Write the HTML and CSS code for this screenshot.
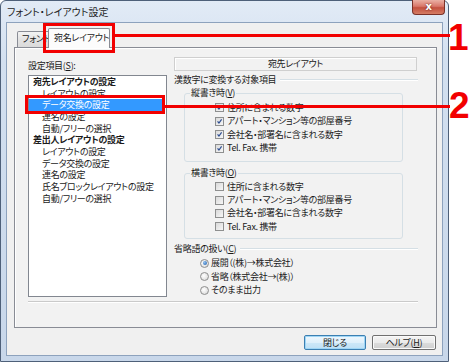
FILE: index.html
```html
<!DOCTYPE html>
<html lang="ja">
<head>
<meta charset="utf-8">
<title>フォント・レイアウト設定</title>
<link rel="stylesheet" href="styles.css">
</head>
<body>
<div class="stage">
  <div class="window">
    <div class="titlebar">
      <span class="title">フォント・レイアウト設定</span>
      <div class="close">x</div>
    </div>
    <div class="client">
      <div class="tabs">
        <div class="tab">フォント</div>
        <div class="tab active">宛名レイアウト</div>
      </div>
      <div class="panel">
        <div class="content">
          <div class="leftcol">
            <div class="label">設定項目(<u>S</u>):</div>
            <ul class="list">
              <li class="head">宛先レイアウトの設定</li>
              <li class="sub">レイアウトの設定</li>
              <li class="sub sel">データ交換の設定</li>
              <li class="sub">連名の設定</li>
              <li class="sub">自動/フリーの選択</li>
              <li class="head">差出人レイアウトの設定</li>
              <li class="sub">レイアウトの設定</li>
              <li class="sub">データ交換の設定</li>
              <li class="sub">連名の設定</li>
              <li class="sub">氏名ブロックレイアウトの設定</li>
              <li class="sub">自動/フリーの選択</li>
            </ul>
          </div>
          <div class="rightcol">
            <div class="header">宛先レイアウト</div>
            <div class="sep g1"><span>漢数字に変換する対象項目</span><i></i></div>
            <fieldset class="fs fs1">
              <legend>縦書き時(<u>V</u>)</legend>
              <div class="rows">
                <div class="row"><span class="cb"><svg viewBox="0 0 9 9"><path d="M2 4.3 L3.8 6.4 L7.2 1.8" fill="none" stroke="#2d4d91" stroke-width="1.5"/></svg></span>住所に含まれる数字</div>
                <div class="row"><span class="cb"><svg viewBox="0 0 9 9"><path d="M2 4.3 L3.8 6.4 L7.2 1.8" fill="none" stroke="#2d4d91" stroke-width="1.5"/></svg></span>アパート・マンション等の部屋番号</div>
                <div class="row"><span class="cb"><svg viewBox="0 0 9 9"><path d="M2 4.3 L3.8 6.4 L7.2 1.8" fill="none" stroke="#2d4d91" stroke-width="1.5"/></svg></span>会社名・部署名に含まれる数字</div>
                <div class="row"><span class="cb"><svg viewBox="0 0 9 9"><path d="M2 4.3 L3.8 6.4 L7.2 1.8" fill="none" stroke="#2d4d91" stroke-width="1.5"/></svg></span>Tel. Fax. 携帯</div>
              </div>
            </fieldset>
            <fieldset class="fs fs2">
              <legend>横書き時(<u>O</u>)</legend>
              <div class="rows">
                <div class="row"><span class="cb"></span>住所に含まれる数字</div>
                <div class="row"><span class="cb"></span>アパート・マンション等の部屋番号</div>
                <div class="row"><span class="cb"></span>会社名・部署名に含まれる数字</div>
                <div class="row"><span class="cb"></span>Tel. Fax. 携帯</div>
              </div>
            </fieldset>
            <div class="sep g3"><span>省略語の扱い(<u>C</u>)</span><i></i></div>
            <div class="radios">
              <div class="row"><span class="rb on"></span>展開（(株)→株式会社）</div>
              <div class="row"><span class="rb"></span>省略（株式会社→(株)）</div>
              <div class="row"><span class="rb"></span>そのまま出力</div>
            </div>
          </div>
        </div>
      </div>
      <div class="buttons">
        <div class="btn default">閉じる</div>
        <div class="btn">ヘルプ(<u>H</u>)</div>
      </div>
    </div>
  </div>
  <div class="mark rect1"></div>
  <div class="mark line1"></div>
  <div class="num n1">1</div>
  <div class="mark rect2"></div>
  <div class="mark line2"></div>
  <div class="num n2">2</div>
</div>
</body>
</html>
```
FILE: styles.css
```css
* { box-sizing: border-box; margin: 0; padding: 0; }
body {
  margin: 0;
  background: #fff;
  font-family: "Noto Sans CJK JP", "Noto Sans", sans-serif;
  font-size: 9px;
  letter-spacing: -0.3px;
  color: #1a1a1a;
  font-feature-settings: "palt";
}
u { text-decoration: underline; text-underline-offset: 1px; }
.stage { position: relative; width: 470px; height: 364px; overflow: hidden; }

.window {
  width: 449px;
  height: 362px;
  display: flex;
  flex-direction: column;
  border: 1px solid #4e6079;
  border-radius: 6px 6px 0 0;
  background: linear-gradient(180deg, #e2ebf6 0, #d3e0f0 60px, #c8d7ea 100%);
}
.titlebar { height: 21px; display: flex; align-items: flex-start; }
.title { margin: 5px 0 0 6px; line-height: 12px; font-size: 10px; letter-spacing: 0; color: #1e1e1e; }
.close {
  margin-left: auto;
  margin-right: 3px;
  margin-top: -1px;
  width: 33px;
  height: 15px;
  border: 1px solid #7a3128;
  border-top: none;
  border-radius: 0 0 4px 4px;
  background: linear-gradient(180deg, #eab0a4 0, #d9776a 45%, #c3503f 55%, #d57d64 100%);
  display: flex;
  align-items: center;
  justify-content: center;
  color: #fff;
  font: bold 10px "DejaVu Sans", sans-serif;
  line-height: 10px;
  text-shadow: 0 0 2px #5a1a12;
}

.client {
  flex: 1;
  margin: 0 5px 5px 5px;
  border: 1px solid #8da2bd;
  background: #f0f0f0;
  padding: 5px 5px 0 7px;
  display: flex;
  flex-direction: column;
}
.tabs { height: 19px; display: flex; align-items: flex-end; }
.tab {
  height: 16px;
  width: 34px;
  margin-left: 3px;
  padding-left: 4px;
  border: 1px solid #898c95;
  border-bottom: none;
  border-radius: 2px 2px 0 0;
  background: linear-gradient(180deg, #f3f3f3, #e3e3e3 50%, #dadada);
  line-height: 14px;
  white-space: nowrap;
  overflow: hidden;
}
.tab.active {
  position: relative;
  z-index: 1;
  height: 20px;
  width: 62px;
  margin-left: -3px;
  margin-bottom: -1px;
  padding-left: 5px;
  background: #fcfcfc;
  line-height: 17px;
}
.panel {
  height: 281px;
  border: 1px solid #898c95;
  background: #f2f2f2;
  box-shadow: inset 1px 1px 0 #fff;
  padding: 9px 18px 0 13px;
}
.content {
  height: 245px;
  display: flex;
  border-bottom: 1px solid #cacaca;
  box-shadow: 0 1px 0 #fff;
}
.leftcol { width: 139px; }
.label { margin-top: 3px; line-height: 12px; }
.list {
  list-style: none;
  margin-top: 3px;
  height: 222px;
  border: 1px solid #828790;
  background: #fff;
  line-height: 11.65px;
}
.list li { white-space: nowrap; }
.list .head { padding-left: 4px; font-weight: bold; }
.list .sub { padding-left: 13px; }
.list .sel { background: #3399ff; color: #fff; margin-right: 3px; }

.rightcol { width: 244px; margin-left: 7px; }
.header {
  width: 243px;
  height: 14px;
  border: 1px solid #cfcfcf;
  box-shadow: inset 1px 1px 0 #fff;
  text-align: center;
  line-height: 12px;
}
.sep { display: flex; align-items: center; height: 12px; line-height: 12px; }
.sep i { flex: 1; height: 2px; border-top: 1px solid #d5dfe5; border-bottom: 1px solid #fff; margin-left: 4px; }
.g1 { margin-top: 3px; }
.g3 { margin-top: 4px; }
.fs {
  margin-left: 10px;
  width: 219px;
  border: 1px solid #d5dfe5;
  border-radius: 3px;
  padding: 0 0 0 5px;
}
.fs legend { line-height: 12px; padding: 0 1px; }
.fs1 { margin-top: 1px; }
.fs1 .rows { padding: 2px 0 6px 25px; }
.fs2 { margin-top: 5px; }
.fs2 .rows { padding: 1px 0 4px 25px; }
.fs1 .row { height: 13.5px; }
.fs2 .row { height: 13.4px; }
.row { display: flex; align-items: center; white-space: nowrap; line-height: 12px; }
.cb {
  width: 9px;
  height: 9px;
  margin-right: 3px;
  border: 1px solid #8e8f8f;
  background: linear-gradient(135deg, #d9d9d9, #f7f7f7);
  flex: none;
  display: flex;
}
.cb svg { width: 7px; height: 7px; }
.radios { margin-top: 2px; padding-left: 26px; }
.radios .row { height: 13.5px; }
.rb {
  width: 9px;
  height: 9px;
  margin-right: 2px;
  border: 1px solid #8e8f8f;
  border-radius: 50%;
  background: radial-gradient(circle at 40% 40%, #fff, #d4d4d4);
  flex: none;
  display: flex;
  align-items: center;
  justify-content: center;
}
.rb.on::after {
  content: "";
  width: 4px;
  height: 4px;
  border-radius: 50%;
  background: radial-gradient(circle at 35% 35%, #8fc0f0, #1c5aa8);
}

.buttons { margin-top: 7px; display: flex; justify-content: flex-end; gap: 6px; padding-right: 1px; }
.btn {
  width: 64px;
  height: 15px;
  border: 1px solid #707070;
  border-radius: 2px;
  background: linear-gradient(180deg, #f4f4f4 0, #ebebeb 50%, #dcdcdc 51%, #cfcfcf 100%);
  text-align: center;
  line-height: 13px;
  box-shadow: inset 0 0 0 1px #fafafa;
}
.btn.default {
  width: 62px;
  border-color: #3c7fb1;
  background: linear-gradient(180deg, #eef7fd 0, #dff0fb 50%, #cde8f8 51%, #bfe0f5 100%);
  box-shadow: inset 0 0 0 1px #9fd6f6;
}

.mark { position: absolute; }
.rect1 { left: 43px; top: 23px; width: 72px; height: 30px; border: 3px solid #f20000; }
.line1 { left: 115px; top: 34px; width: 335px; height: 3px; background: #f20000; }
.rect2 { left: 25px; top: 95px; width: 140px; height: 19px; border: 3px solid #f20000; }
.line2 { left: 165px; top: 105px; width: 285px; height: 3px; background: #f20000; }
.num {
  position: absolute;
  font: bold 37px/37px "Liberation Sans", Arial, sans-serif;
  letter-spacing: 0;
  color: #f20000;
}
.n1 { left: 448px; top: 19px; }
.n2 { left: 449px; top: 87px; }
```
